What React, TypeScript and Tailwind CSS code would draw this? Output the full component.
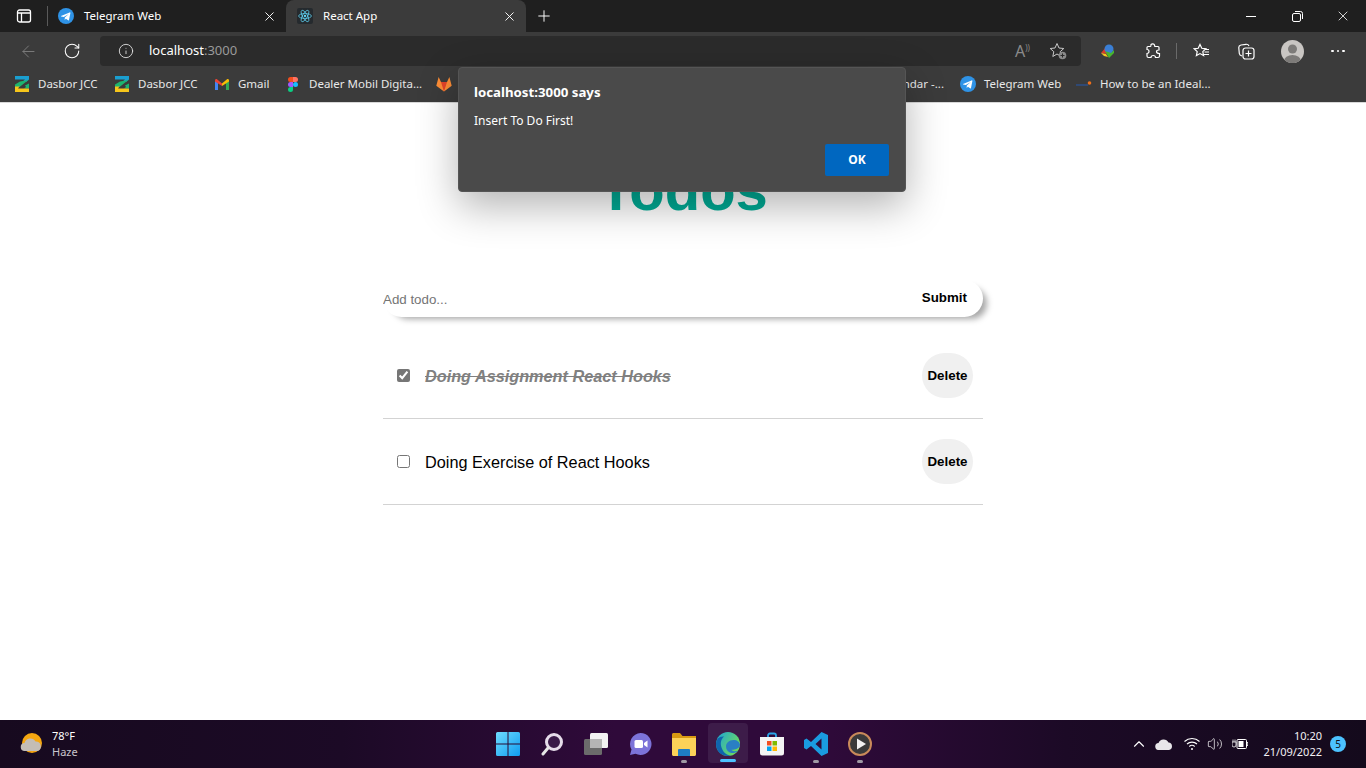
import React from "react";
import { ArrowLeft, RotateCw, Info, X, Plus, ChevronUp, Volume2 } from "lucide-react";

const uiFont = "font-['Noto_Sans',sans-serif]";

const TelegramIcon = ({ size = 16 }: { size?: number }) => (
  <svg width={size} height={size} viewBox="0 0 16 16">
    <circle cx="8" cy="8" r="8" fill="#2f93e6" />
    <path d="M3 7.9l8.6-3.5c.5-.2.9.1.8.7l-1.4 6.8c-.1.5-.5.6-.9.4L7.900 10.700 6.700 11.900l.1-2.400 4-3.600-5 3.100L3.100 8.400z" fill="#fff" />
  </svg>
);

const ReactIcon = () => (
  <div className="w-4 h-4 bg-[#252a2e] rounded-[2px] flex items-center justify-center">
    <svg width="14" height="14" viewBox="-12 -12 24 24" fill="none" stroke="#61dafb" strokeWidth="1.2">
      <circle r="2" fill="#61dafb" stroke="none" />
      <ellipse rx="11" ry="4.2" />
      <ellipse rx="11" ry="4.2" transform="rotate(60)" />
      <ellipse rx="11" ry="4.2" transform="rotate(120)" />
    </svg>
  </div>
);

const JccIcon = () => (
  <svg width="14" height="16" viewBox="0 0 14 16">
    <path d="M0 0h14v3.500L11 6H7l3-2.500H0z" fill="#1a9fd0" />
    <path d="M11 4.500L14 3.500 4.500 11H0V8.500L5 5.500z" fill="#1db56f" />
    <path d="M14 7.500v5H9l2-1.500-1-1.500z" fill="#1db56f" />
    <path d="M0 10.500h4.500L3 12.500h11V16H0z" fill="#f7c61b" />
  </svg>
);

const GmailIcon = () => (
  <svg width="14" height="11" viewBox="0 0 14 11">
    <path d="M0 1.500V11h3V4z" fill="#4285f4" />
    <path d="M14 1.500V11h-3V4z" fill="#34a853" />
    <path d="M0 1.500C0 .3 1.200-.3 2 .3L7 4.500 7 7 0 2.500z" fill="#ea4335" />
    <path d="M14 1.500C14 .3 12.800-.3 12 .3L7 4.500 7 7l7-4.500z" fill="#fbbc04" />
  </svg>
);

const FigmaIcon = () => (
  <svg width="10" height="15" viewBox="0 0 10 15">
    <path d="M5 0H2.500a2.500 2.500 0 000 5H5z" fill="#f24e1e" />
    <path d="M5 0h2.500a2.500 2.500 0 010 5H5z" fill="#ff7262" />
    <path d="M5 5H2.500a2.500 2.500 0 000 5H5z" fill="#a259ff" />
    <circle cx="7.500" cy="7.500" r="2.500" fill="#1abcfe" />
    <path d="M5 10H2.500A2.500 2.500 0 105 12.500z" fill="#0acf83" />
  </svg>
);

const GitlabIcon = () => (
  <svg width="17" height="16" viewBox="0 0 17 16">
    <path d="M8.500 16L.3 9.800 2.800.5 5.300 6h6.400L14.200.5l2.500 9.300z" fill="#fc8d36" />
    <path d="M8.500 16L5.300 6h6.400z" fill="#e24329" />
  </svg>
);

const Bookmark = ({ icon, label, className }: { icon: React.ReactNode; label?: string; className: string }) => (
  <div className={`flex items-center shrink-0 ${className}`}>
    <div className="w-4 flex justify-center">{icon}</div>
    {label && <span className="ml-[8px] text-[11.5px] text-[#e8e8e8] whitespace-nowrap">{label}</span>}
  </div>
);

const BrowserChrome = () => (
  <div className={`shrink-0 ${uiFont}`}>
    {/* tab strip */}
    <div className="h-8 bg-[#1f1f1f] flex items-center text-white">
      <div className="w-[47px] flex justify-center">
        <svg width="16" height="16" viewBox="0 0 16 16" fill="none" stroke="#fff" strokeWidth="1.300">
          <rect x="1.500" y="2" width="13" height="12" rx="2" />
          <path d="M1.500 5h13M5.500 5v9" />
        </svg>
      </div>
      <div className="w-px h-5 bg-[#5a5a5a]" />
      <div className="w-[238px] h-full flex items-center pl-[10px] pr-[8px]">
        <TelegramIcon />
        <span className="ml-[10px] text-[11.5px] flex-1">Telegram Web</span>
        <X size={15} strokeWidth={1.5} className="mr-[1px]" />
      </div>
      <div className="w-[240px] h-full bg-[#3b3b3b] rounded-t-lg flex items-center pl-[11px] pr-[9px]">
        <ReactIcon />
        <span className="ml-[10px] text-[11.5px] flex-1">React App</span>
        <X size={15} strokeWidth={1.5} />
      </div>
      <Plus size={18} strokeWidth={1.3} className="ml-[9px]" />
      <div className="flex-1" />
      <div className="flex items-center">
        <div className="w-[46px] flex justify-center">
          <div className="w-[10px] h-px bg-white" />
        </div>
        <div className="w-[46px] flex justify-center">
          <svg width="11" height="11" viewBox="0 0 11 11" fill="none" stroke="#fff">
            <rect x="0.500" y="2.500" width="8" height="8" rx="1.500" />
            <path d="M3 .5h5.500a2 2 0 012 2V8" />
          </svg>
        </div>
        <div className="w-[46px] flex justify-center">
          <X size={16} strokeWidth={1.2} />
        </div>
      </div>
    </div>
    {/* toolbar */}
    <div className="h-9 pt-0.5 bg-[#3b3b3b] flex items-center">
      <div className="w-[56px] flex justify-center">
        <ArrowLeft size={19} strokeWidth={1.2} className="text-[#7c7c7c]" />
      </div>
      <div className="w-[32px] flex justify-center">
        <RotateCw size={18} strokeWidth={1.4} className="text-white" />
      </div>
      <div className="w-[981px] ml-[12px] h-[30px] bg-[#2b2b2b] rounded-[4px] flex items-center">
        <Info size={16} strokeWidth={1.3} className="ml-[18px] text-[#e6e6e6]" />
        <span className="ml-[15px] text-[13px] text-white">
          localhost<span className="text-[#9a9a9a]">:3000</span>
        </span>
        <div className="flex-1" />
        <span className="text-[16px] text-[#8a8a8a] mr-[19px] leading-none">
          A<span className="text-[8px] align-super">))</span>
        </span>
        <svg width="18" height="18" viewBox="0 0 18 18" fill="none" stroke="#c8c8c8" className="mr-[14px]">
          <path d="M8 1.500l2 4.500 4.800.5-3.600 3.200 1 4.800L8 12l-4.200 2.500 1-4.800L1.200 6.500 6 6z" />
          <circle cx="13.500" cy="13.500" r="3.800" fill="#8a8a8a" stroke="none" />
          <path d="M13.500 11.500v4M11.500 13.500h4" stroke="#2b2b2b" />
        </svg>
      </div>
      <div className="w-[54px] flex justify-center">
        <svg width="16" height="15" viewBox="0 0 16 15">
          <path d="M1 9l5-6 2 7z" fill="#d8392b" />
          <circle cx="9" cy="5" r="4.500" fill="#3a7fd5" />
          <path d="M5 7l6 2 3-3v3l-5 5z" fill="#47b52e" />
          <path d="M1 9l5 1 2 3-4-1z" fill="#f2c522" />
        </svg>
      </div>
      <div className="w-[36px] flex justify-center">
        <svg width="16" height="16" viewBox="0 0 16 16" fill="none" stroke="#fff" strokeWidth="1.200">
          <path d="M6 1.500c1-1 3-1 3.500.5.200.7 0 1 .5 1.500h3c.6 0 1 .4 1 1v2.500c-1 0-2.500.2-2.500 1.800S13.500 10.500 14.500 10.500V13c0 .8-.5 1.500-1.500 1.500H10.500c0-1.200-1-2-2.200-2S6 13.300 6 14.500H3.500C2.500 14.500 2 13.800 2 13v-2.500c1.200 0 2-.8 2-2S3 6.500 2 6.500V4.500c0-.6.400-1 1-1h2.500c.5 0 .5-1.300.5-2z" />
        </svg>
      </div>
      <div className="w-px h-[16px] bg-[#6a6a6a] ml-[5px]" />
      <div className="w-[49px] flex justify-center">
        <svg width="17" height="16" viewBox="0 0 17 16" fill="none" stroke="#fff" strokeWidth="1.200">
          <path d="M7 1.500l1.800 3.800 4 .5-3 2.800.8 4L7 10.600 3.400 12.600l.8-4-3-2.800 4-.5zM11.500 6.500H16M11.500 9H16M10.500 11.500H16" />
        </svg>
      </div>
      <div className="w-[40px] flex justify-center">
        <svg width="17" height="17" viewBox="0 0 17 17" fill="none" stroke="#fff" strokeWidth="1.200">
          <path d="M4 13c-1.500-.3-2.500-1-2.700-2.500L.8 5C.6 3.500 1.500 2.300 3 2l5-.7c1.500-.2 2.500.5 3 1.700" />
          <rect x="5" y="5" width="11" height="11" rx="2.500" />
          <path d="M10.500 7.500v6M7.500 10.500h6" />
        </svg>
      </div>
      <div className="w-[52px] flex justify-center">
        <svg width="23" height="23" viewBox="0 0 23 23">
          <clipPath id="pf"><circle cx="11.500" cy="11.500" r="11.500" /></clipPath>
          <circle cx="11.500" cy="11.500" r="11.500" fill="#c9c6c3" />
          <g clipPath="url(#pf)" fill="#7d7b79">
            <circle cx="11.500" cy="9" r="4.500" />
            <ellipse cx="11.500" cy="21" rx="8.500" ry="6" />
          </g>
        </svg>
      </div>
      <div className="w-[40px] flex justify-center items-center gap-[3px]">
        <div className="w-[2.500px] h-[2.500px] rounded-full bg-white" />
        <div className="w-[2.500px] h-[2.500px] rounded-full bg-white" />
        <div className="w-[2.500px] h-[2.500px] rounded-full bg-white" />
      </div>
    </div>
    {/* bookmarks */}
    <div className="h-[34px] pb-0.5 bg-[#3b3b3b] flex items-center pl-[14px]">
      <Bookmark icon={<JccIcon />} label="Dasbor JCC" className="w-[100px]" />
      <Bookmark icon={<JccIcon />} label="Dasbor JCC" className="w-[100px]" />
      <Bookmark icon={<GmailIcon />} label="Gmail" className="w-[71px]" />
      <Bookmark icon={<FigmaIcon />} label="Dealer Mobil Digita..." className="w-[151px]" />
      <Bookmark icon={<GitlabIcon />} className="w-[464px]" />
      <div className="w-[44px] text-right text-[11.5px] text-[#e8e8e8] whitespace-nowrap overflow-hidden shrink-0">ndar -...</div>
      <Bookmark icon={<TelegramIcon />} label="Telegram Web" className="w-[116px] ml-[16px]" />
      <Bookmark
        icon={
          <svg width="16" height="6" viewBox="0 0 16 6">
            <path d="M0 4h12" stroke="#2c4f8a" strokeWidth="1.500" />
            <circle cx="13.500" cy="2" r="1.800" fill="#f0701a" />
          </svg>
        }
        label="How to be an Ideal..."
        className="w-[140px]"
      />
    </div>
  </div>
);

const TodoRow = ({ text, done }: { text: string; done: boolean }) => (
  <div className="flex items-center pl-[14px] pr-[10px] py-5 border-b border-[#d3d3d3]">
    <input type="checkbox" defaultChecked={done} className="w-[13px] h-[13px] accent-[#767676]" />
    <span
      className={`ml-[15px] flex-1 pt-0.5 text-[16.25px] ${done ? "font-bold italic line-through text-[#808080]" : "text-black"}`}
    >
      {text}
    </span>
    <button className="w-[51px] h-[45px] rounded-full bg-[#f0f0f0] text-[13.33px] font-bold text-black">Delete</button>
  </div>
);

const TodoPage = () => (
  <div className="flex-1 bg-white font-['Liberation_Sans',sans-serif]">
    <div className="w-[600px] mx-auto pt-[52px]">
      <h1 className="text-[58px] font-bold leading-[69px] text-center text-[#00ab95]">Todos</h1>
      <form className="mt-[56px] mb-4 h-[37px] flex items-center rounded-[20px] bg-white shadow-[7px_5px_6px_-3px_rgba(0,0,0,0.35)]">
        <input
          placeholder="Add todo..."
          className="flex-1 text-[13.33px] mt-[3px] outline-none placeholder:text-[#757575]"
        />
        <button type="button" className="text-[13.33px] font-bold text-black mr-4 mb-[1px]">
          Submit
        </button>
      </form>
      <TodoRow text="Doing Assignment React Hooks" done />
      <TodoRow text="Doing Exercise of React Hooks" done={false} />
    </div>
  </div>
);

const AlertDialog = () => (
  <div
    className={`absolute left-[458px] top-[67px] w-[448px] h-[125px] bg-[#4a4a4a] rounded-[4px] border border-[#555] shadow-[0_14px_40px_rgba(0,0,0,0.3)] text-white pl-[15px] pr-[16px] ${uiFont}`}
  >
    <p className="mt-[14px] text-[13.25px] leading-[20px] font-bold">localhost:3000 says</p>
    <p className="mt-[9px] text-[12px] leading-[20px]">Insert To Do First!</p>
    <div className="flex justify-end mt-[13px]">
      <button className="w-16 h-8 bg-[#0067c0] rounded-[2px] text-[12px] font-bold">OK</button>
    </div>
  </div>
);

const TaskIcon = ({ children, dot, active }: { children: React.ReactNode; dot?: boolean; active?: boolean }) => (
  <div className="relative w-[24px] h-[24px] flex items-center justify-center">
    {active && <div className="absolute -left-[8px] -top-[9px] w-10 h-10 rounded-[4px] bg-[#3d1c49]" />}
    <div className="relative">{children}</div>
    {dot && <div className="absolute left-[9px] top-[28px] w-[6px] h-[3px] rounded-full bg-[#a09aa4]" />}
    {active && <div className="absolute left-[4px] top-[27px] w-4 h-[3px] rounded-full bg-[#4cc2ff]" />}
  </div>
);

const Taskbar = () => (
  <div
    className={`h-12 shrink-0 flex items-center justify-between bg-[linear-gradient(90deg,#170a1f_0%,#1c0a26_25%,#2f0a3a_45%,#2f0a3a_60%,#1c0a26_78%,#140a1c_100%)] ${uiFont}`}
  >
    <div className="w-[302px] flex items-center pl-[20px]">
      <svg width="24" height="22" viewBox="0 0 24 22">
        <circle cx="12" cy="10" r="10" fill="#f5a711" />
        <path d="M12 18a9 9 0 009-4H3a9 9 0 009 4z" fill="#e8701a" />
        <path d="M5 18a4 4 0 01-.5-8 6 6 0 0111-1.500A5 5 0 0118 18z" fill="#c4bdb5" />
      </svg>
      <div className="ml-[8px] text-[11px] leading-[16px]">
        <div className="text-white">78°F</div>
        <div className="text-[#c9c5cc]">Haze</div>
      </div>
    </div>
    <div className="flex items-center gap-5">
      <TaskIcon>
        <svg width="24" height="24" viewBox="0 0 24 24">
          <defs>
            <linearGradient id="win" x1="0" y1="0" x2="1" y2="1">
              <stop offset="0" stopColor="#6fdcff" />
              <stop offset="1" stopColor="#0f9cf0" />
            </linearGradient>
          </defs>
          <path d="M0 1.500A1.500 1.500 0 011.500 0h10v11.500H0zM12.500 0h10A1.500 1.500 0 0124 1.500v10H12.500zM0 12.500h11.500V24h-10A1.500 1.500 0 010 22.500zM12.500 12.500H24v10a1.500 1.500 0 01-1.500 1.500h-10z" fill="url(#win)" />
        </svg>
      </TaskIcon>
      <TaskIcon>
        <svg width="24" height="24" viewBox="0 0 24 24" fill="none">
          <circle cx="14" cy="10" r="7.500" stroke="#e6dcea" strokeWidth="3" fill="#3a1a48" />
          <path d="M8 16l-5 6" stroke="#e6e6e6" strokeWidth="3" strokeLinecap="round" />
        </svg>
      </TaskIcon>
      <TaskIcon>
        <svg width="24" height="22" viewBox="0 0 24 22">
          <rect x="6" y="0" width="18" height="15" rx="1.500" fill="#f2f2f2" />
          <rect x="0" y="6" width="18" height="16" rx="1.500" fill="#6b6b6b" />
          <rect x="6" y="6" width="12" height="9" fill="#b5b5b5" />
        </svg>
      </TaskIcon>
      <TaskIcon>
        <svg width="24" height="24" viewBox="0 0 24 24">
          <path d="M12.500 1a11 11 0 11-5 20.800L2 23l1.500-5.500A11 11 0 0112.500 1z" fill="#7c73d8" />
          <rect x="6.500" y="8" width="8.500" height="8" rx="1.500" fill="#fff" />
          <path d="M16 11l3.500-2.500v7L16 13z" fill="#fff" />
        </svg>
      </TaskIcon>
      <TaskIcon dot>
        <svg width="24" height="23" viewBox="0 0 24 23">
          <path d="M0 1.500C0 .7.700 0 1.500 0h6.500l2.500 3H24v3H0z" fill="#d99a12" />
          <path d="M0 5h24v16.500c0 .8-.7 1.500-1.500 1.500h-21C.7 23 0 22.300 0 21.500z" fill="#fcd258" />
          <path d="M7 16h10a1 1 0 011 1v6H6v-6a1 1 0 011-1z" fill="#1e7cc4" />
        </svg>
      </TaskIcon>
      <TaskIcon active>
        <svg width="24" height="24" viewBox="0 0 24 24">
          <defs>
            <linearGradient id="edgeTop" x1="0" y1="0" x2="1" y2="0.600">
              <stop offset="0" stopColor="#1ba3d8" />
              <stop offset="1" stopColor="#6fdc5a" />
            </linearGradient>
          </defs>
          <circle cx="12" cy="12" r="12" fill="url(#edgeTop)" />
          <path d="M24 13c0-3-3-5-6.500-5C13 8 10 11 10 14.500c0 3 2 6 6 6.500 1.500.2 4.500-.3 6-2.500-2 1-5.500 1-6.500-.8 2 .2 8.500-.7 8.500-4.700z" fill="#2a7fc4" />
          <path d="M12 24C5 24 0 19 0 12c0-1 .2-2 .5-3C2 5 5.500 4.500 8 4.500 5 7 4 11 5.500 15.500 7 20 10 23 15 23.600c-1 .3-2 .4-3 .4z" fill="#0f64ae" />
        </svg>
      </TaskIcon>
      <TaskIcon>
        <svg width="24" height="24" viewBox="0 0 24 24">
          <path d="M8 6V3.500A2 2 0 0110 1.500h4a2 2 0 012 2V6" stroke="#2aa5e8" strokeWidth="1.800" fill="none" />
          <path d="M0 5h24v16a2.500 2.500 0 01-2.500 2.500h-19A2.500 2.500 0 010 21z" fill="#f4f4f4" />
          <rect x="7" y="9" width="4.500" height="4.500" fill="#f25022" />
          <rect x="12.500" y="9" width="4.500" height="4.500" fill="#7fba00" />
          <rect x="7" y="14.500" width="4.500" height="4.500" fill="#00a4ef" />
          <rect x="12.500" y="14.500" width="4.500" height="4.500" fill="#ffb900" />
        </svg>
      </TaskIcon>
      <TaskIcon dot>
        <svg width="24" height="24" viewBox="0 0 24 24">
          <path d="M17.500 0L24 3v18l-6.500 3L7 14l-4.500 3.500L0 16V8l2.500-1.500L7 10zM17.500 6.500L11.500 12l6 5.500z" fill="#1a9be0" />
        </svg>
      </TaskIcon>
      <TaskIcon dot>
        <svg width="24" height="24" viewBox="0 0 24 24">
          <circle cx="12" cy="12" r="11" fill="#3a3a3a" stroke="#c98a5a" strokeWidth="2" />
          <path d="M9 6.500l9 5.500-9 5.500z" fill="#f2f2f2" />
        </svg>
      </TaskIcon>
    </div>
    <div className="w-[300px] flex items-center justify-end pr-[20px] text-white">
      <ChevronUp size={18} strokeWidth={1.5} />
      <svg width="18" height="11" viewBox="0 0 18 11" className="ml-[7px]">
        <path d="M4 11a3.500 3.500 0 01-.5-7A5.500 5.500 0 0113.500 3.500 3.800 3.800 0 0114 11z" fill="#e8e6ea" />
      </svg>
      <svg width="16" height="14" viewBox="0 0 16 14" fill="none" stroke="#fff" strokeWidth="1.100" className="ml-[11px]">
        <path d="M.5 4.500a11 11 0 0115 0M3 7a7.500 7.500 0 0110 0M5.300 9.500a4 4 0 015.400 0" />
        <circle cx="8" cy="12" r="1" fill="#fff" stroke="none" />
      </svg>
      <Volume2 size={16} strokeWidth={1.1} className="ml-[7px]" />
      <svg width="16" height="12" viewBox="0 0 16 12" fill="none" className="ml-[9px]">
        <rect x="5" y="1.500" width="9.500" height="9" rx="1" stroke="#fff" />
        <rect x="6.500" y="3" width="5" height="6" fill="#fff" />
        <path d="M15 4.500h1v3h-1zM0 4h4v3a2 2 0 01-4 0zM1 1.500V4M3 1.500V4" stroke="#fff" strokeWidth="0.800" />
      </svg>
      <div className="ml-[14px] w-[60px] text-right text-[11px] leading-[16px] text-[#f2eff4]">
        <div>10:20</div>
        <div className="whitespace-nowrap">21/09/2022</div>
      </div>
      <div className="ml-[8px] w-4 h-4 rounded-full bg-[#4cc2ff] text-[#11131a] text-[10px] flex items-center justify-center">5</div>
    </div>
  </div>
);

export default function App() {
  return (
    <div className="relative h-screen w-full overflow-hidden flex flex-col">
      <BrowserChrome />
      <div className="h-px bg-[#d8d8d8] shrink-0" />
      <TodoPage />
      <Taskbar />
      <AlertDialog />
    </div>
  );
}
